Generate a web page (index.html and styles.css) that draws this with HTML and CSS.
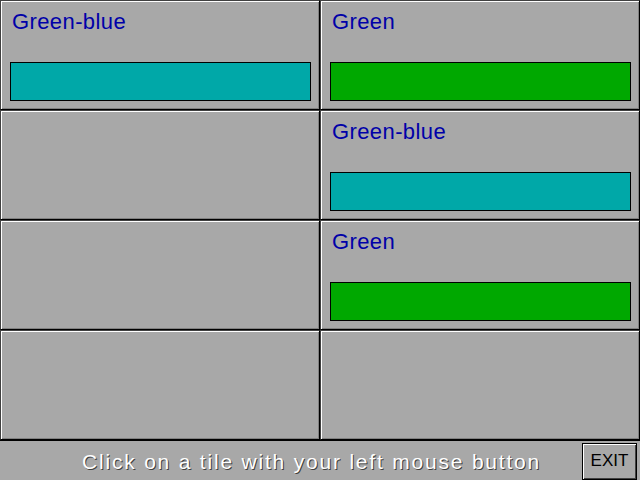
FILE: index.html
```html
<!DOCTYPE html>
<html>
<head>
<meta charset="utf-8">
<link rel="stylesheet" href="styles.css">
</head>
<body>
<div class="screen">
  <div class="grid">
    <div class="tile"><div class="label">Green-blue</div><div class="bar teal"></div></div>
    <div class="tile"><div class="label">Green</div><div class="bar green"></div></div>
    <div class="tile"></div>
    <div class="tile"><div class="label">Green-blue</div><div class="bar teal"></div></div>
    <div class="tile"></div>
    <div class="tile"><div class="label">Green</div><div class="bar green"></div></div>
    <div class="tile"></div>
    <div class="tile"></div>
  </div>
  <div class="status">
    <span class="hint">Click on a tile with your left mouse button</span>
    <button class="exit">EXIT</button>
  </div>
</div>
</body>
</html>
```
FILE: styles.css
```css
html, body {
  margin: 0;
  padding: 0;
  background: #a8a8a8;
}
.screen {
  width: 640px;
  height: 480px;
  display: flex;
  flex-direction: column;
  background: #a8a8a8;
  font-family: "Liberation Sans", Arial, sans-serif;
}
.grid {
  display: grid;
  grid-template-columns: 320px 320px;
  grid-template-rows: repeat(4, 110px);
}
.tile {
  box-sizing: border-box;
  border: 1px solid #000;
  border-top-color: #404040;
  border-left-color: #404040;
  box-shadow: inset 1px 1px 0 #fff, inset -1px -1px 0 #808080;
  padding: 10px 0 0 11px;
  display: flex;
  flex-direction: column;
  align-items: flex-start;
}
.label {
  font-size: 22px;
  line-height: 22px;
  letter-spacing: 0.4px;
  color: #0000a8;
  height: 22px;
}
.bar {
  box-sizing: border-box;
  margin-top: 29px;
  margin-left: -2px;
  width: 301px;
  height: 39px;
  border: 1px solid #000;
}
.teal { background: #00a8a8; }
.green { background: #00a800; }
.status {
  box-sizing: border-box;
  height: 40px;
  display: flex;
  align-items: center;
  border-top: 1px solid #000;
}
.hint {
  margin-left: 82px;
  font-size: 21px;
  letter-spacing: 1.8px;
  color: #fff;
  text-shadow: 1px 1px 0 #404040;
  flex: 1;
  line-height: 21px;
  padding-top: 2px;
}
.exit {
  box-sizing: border-box;
  width: 55px;
  height: 37px;
  margin: 1px 3px 0 0;
  padding: 0;
  background: #a8a8a8;
  border: 1px solid #000;
  box-shadow: inset 1px 1px 0 #fff, inset -1px -1px 0 #404040;
  font-family: "Liberation Sans", Arial, sans-serif;
  font-size: 17px;
  color: #000;
}
```
